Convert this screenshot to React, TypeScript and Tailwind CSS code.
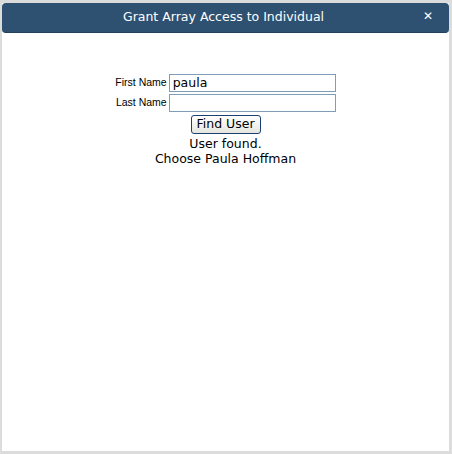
import React from "react";

const dv = { fontFamily: '"DejaVu Sans", Verdana, sans-serif' };

export default function App() {
  return (
    <div className="w-[452px] h-[454px] bg-[#dcdcdc] pl-[2px] pr-[3px] pt-[3px] pb-[3px] flex flex-col">
      <div className="flex-1 bg-white flex flex-col">
        <div
          className="h-[30px] bg-[#2e5172] rounded-[4px] border-b border-[#24405a] flex items-center relative text-white"
          style={dv}
        >
          <div className="flex-1 text-center text-[12.5px] pr-[4px]">Grant Array Access to Individual</div>
          <div className="absolute right-[16px] top-[7px] text-[12px] font-bold leading-none">✕</div>
        </div>
        <div className="flex flex-col items-center pt-[41px]">
          <div
            className="grid grid-cols-[auto_auto] gap-x-[2px] gap-y-[2px] items-center"
            style={{ fontFamily: '"Liberation Sans", Arial, sans-serif' }}
          >
            <div className="text-[10.5px] text-right text-black">First Name</div>
            <input
              defaultValue="paula"
              className="w-[167px] h-[18px] border border-[#7f9db9] px-[3px] text-[12.5px] text-black outline-none"
              style={dv}
            />
            <div className="text-[10.5px] text-right text-black">Last Name</div>
            <input
              defaultValue=""
              className="w-[167px] h-[18px] border border-[#7f9db9] px-[3px] text-[12.5px] outline-none"
              style={dv}
            />
          </div>
          <div className="flex flex-col items-center text-[12.5px] text-black leading-[15px]" style={dv}>
            <button
              className="mt-[3px] w-[70px] h-[19px] border border-[#1c3f73] rounded-[3px] bg-gradient-to-b from-white to-[#e6e6e0] text-[12.5px] leading-none flex items-center justify-center text-black"
              style={dv}
            >
              Find User
            </button>
            <div className="mt-[2px]">User found.</div>
            <div>Choose Paula Hoffman</div>
          </div>
        </div>
      </div>
    </div>
  );
}
